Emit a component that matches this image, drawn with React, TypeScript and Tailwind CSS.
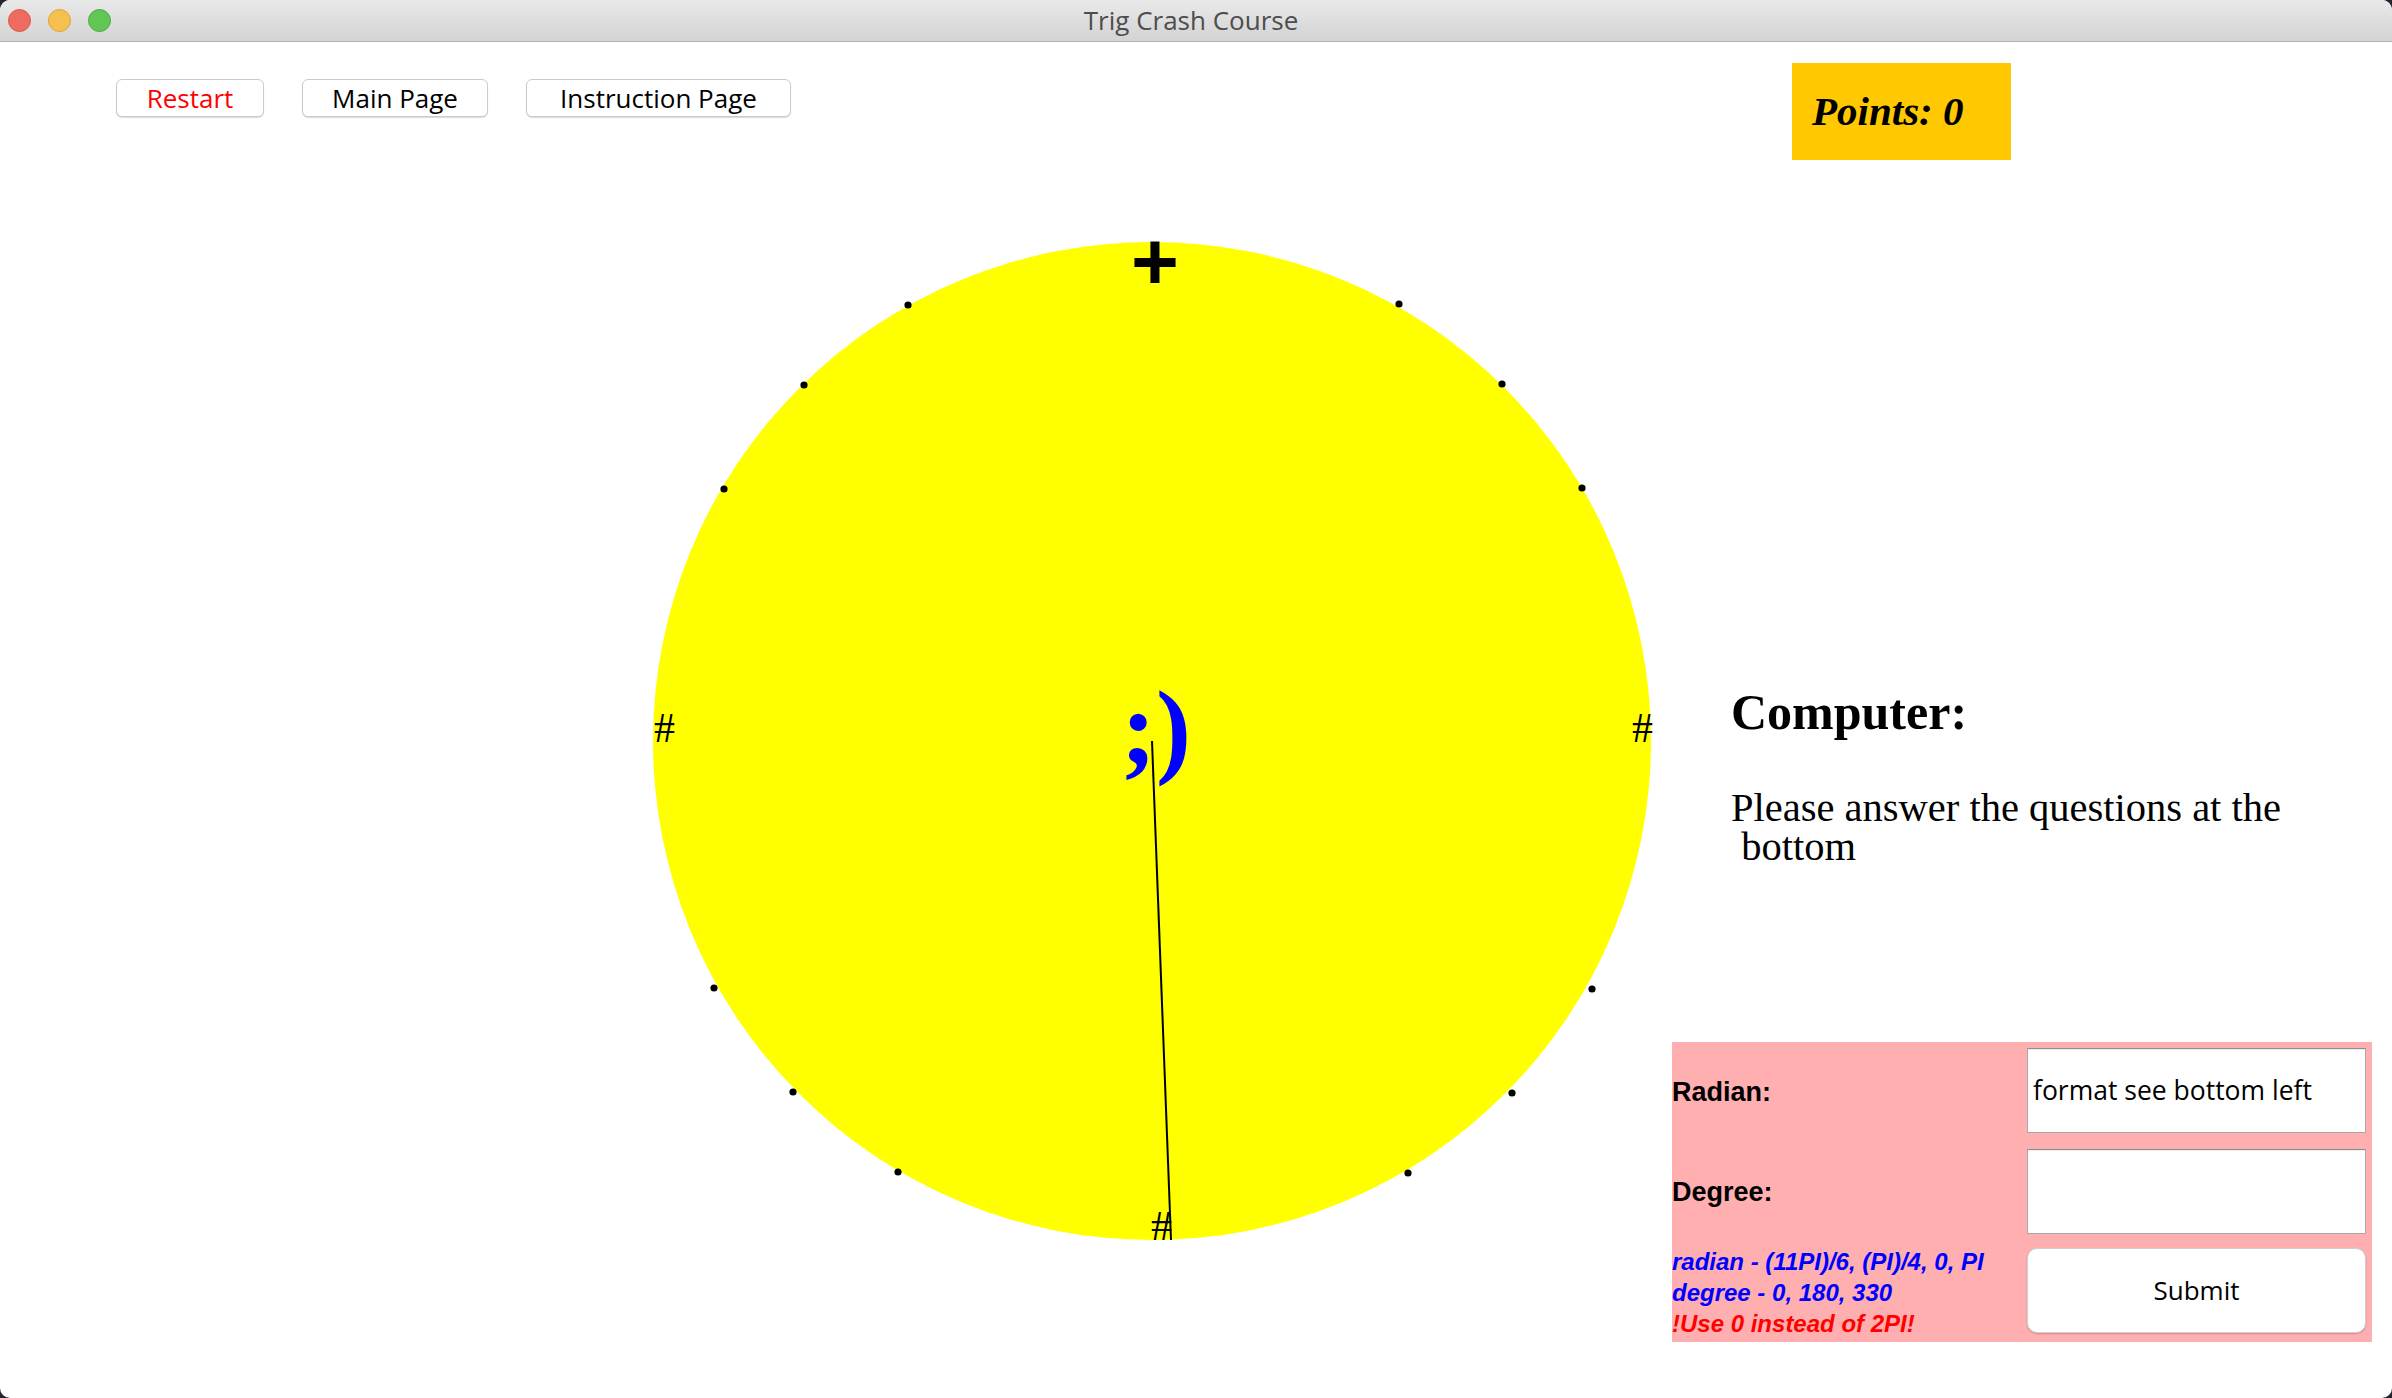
const serif = "font-['Liberation_Serif','Times_New_Roman',serif]";
const ui = "font-['Open_Sans','Noto_Sans',sans-serif]";
const arial = "font-['Liberation_Sans',Arial,sans-serif]";

// svg origin on the page is (642, 181)
const OX = 642;
const OY = 181;
const CX = 510;
const CY = 560;
const R = 499;

// tick dots, page coordinates
const dots: [number, number][] = [
  [908, 305], [804, 385], [724, 489],
  [1399, 304], [1502, 384], [1582, 488],
  [714, 988], [793, 1092], [898, 1172],
  [1592, 989], [1512, 1093], [1408, 1173],
];

function TitleBar() {
  return (
    <div className="h-[42px] flex items-center border-b border-[#b4b4b4] bg-gradient-to-b from-[#e9e9e9] to-[#d3d3d3]">
      <div className="w-[120px] flex items-center gap-[17px] pl-[8px]">
        <span className="w-[23px] h-[23px] rounded-full bg-[#ee6b60] border border-[#d8584d]" />
        <span className="w-[23px] h-[23px] rounded-full bg-[#f6c04f] border border-[#dba33a]" />
        <span className="w-[23px] h-[23px] rounded-full bg-[#62c655] border border-[#4fa942]" />
      </div>
      <div className={`flex-1 text-center pr-[10px] text-[26px] text-[#4d4d4d] ${ui}`}>Trig Crash Course</div>
      <div className="w-[120px]" />
    </div>
  );
}

function TopButton({ label, width, red }: { label: string; width: string; red?: boolean }) {
  return (
    <button
      className={`${width} h-[38px] rounded-[6px] bg-white border border-[#cbcbcb] shadow-[0_1px_1px_rgba(0,0,0,0.15)] text-[26px] leading-none ${ui} ${
        red ? 'text-[#ff0000]' : 'text-black'
      }`}
    >
      {label}
    </button>
  );
}

function UnitCircle() {
  return (
    <svg width={1020} height={1070} viewBox="0 0 1020 1070" className="ml-[642px] mt-[64px]">
      <circle cx={CX} cy={CY} r={R} fill="#ffff00" />
      {dots.map(([x, y]) => (
        <circle key={`${x}-${y}`} cx={x - OX} cy={y - OY} r={3.6} fill="#000" />
      ))}
      <text x={513} y={108} textAnchor="middle" fontSize={82} fontWeight={700} fontFamily="Liberation Sans, Arial, sans-serif">
        +
      </text>
      <g fontSize={42} fontFamily="Liberation Serif, Times New Roman, serif" fill="#000">
        <text x={12} y={561}>#</text>
        <text x={990} y={561}>#</text>
        <text x={509} y={1059}>#</text>
      </g>
      <text x={479} y={583} fontSize={105} fontWeight={700} fill="#0000ff" fontFamily="Liberation Serif, Times New Roman, serif">
        ;)
      </text>
      <line x1={CX} y1={CY} x2={529} y2={1059} stroke="#000" strokeWidth={2} />
    </svg>
  );
}

function Field({ value }: { value?: string }) {
  return (
    <div className="h-full bg-white border border-[#a9a9a9] border-t-[#8e8e8e] shadow-[inset_0_1px_1px_rgba(0,0,0,0.08)] flex items-center px-[5px]">
      <span className={`text-[26.5px] text-black ${ui}`}>{value}</span>
    </div>
  );
}

function AnswerPanel() {
  return (
    <div className="mt-auto mb-[56px] w-[700px] h-[300px] grid grid-cols-2 grid-rows-3 bg-[#ffafaf]">
      <div className={`flex items-center text-[27px] font-bold text-black ${arial}`}>Radian:</div>
      <div className="pl-[5px] pr-[6px] pt-[6px] pb-[9px]">
        <Field value="format see bottom left" />
      </div>
      <div className={`flex items-center text-[27px] font-bold text-black ${arial}`}>Degree:</div>
      <div className="pl-[5px] pr-[6px] pt-[7px] pb-[8px]">
        <Field />
      </div>
      <div className={`flex flex-col justify-center text-[24px] leading-[31px] font-bold italic ${arial}`}>
        <span className="text-[#0000ff]">radian - (11PI)/6, (PI)/4, 0, PI</span>
        <span className="text-[#0000ff]">degree - 0, 180, 330</span>
        <span className="text-[#ff0000]">!Use 0 instead of 2PI!</span>
      </div>
      <div className="pl-[5px] pr-[6px] pt-[6px] pb-[9px]">
        <button
          className={`w-full h-full rounded-[10px] bg-white border border-[#cfcfcf] shadow-[0_1px_2px_rgba(0,0,0,0.2)] text-[26px] text-black ${ui}`}
        >
          Submit
        </button>
      </div>
    </div>
  );
}

export default function App() {
  return (
    <div className="w-[2392px] h-[1398px] bg-[#24242f] overflow-hidden">
      <div className="w-full h-full rounded-[10px] overflow-hidden bg-white flex flex-col">
        <TitleBar />
        <div className="flex-1 flex">
          <div className="w-[1672px] flex flex-col">
            <div className="pt-[37px] pl-[116px] flex gap-[38px]">
              <TopButton label="Restart" width="w-[148px]" red />
              <TopButton label="Main Page" width="w-[186px]" />
              <TopButton label="Instruction Page" width="w-[265px]" />
            </div>
            <UnitCircle />
          </div>
          <div className="w-[720px] flex flex-col">
            <div className="mt-[21px] ml-[120px] w-[219px] h-[97px] bg-[#ffc800] flex items-center pl-[20px]">
              <span className={`text-[41px] font-bold italic text-black ${serif}`}>Points: 0</span>
            </div>
            <h1 className={`mt-[527px] ml-[59px] text-[50px] leading-none font-bold text-black ${serif}`}>Computer:</h1>
            <p className={`mt-[51px] ml-[59px] text-[40.5px] leading-[39px] text-black whitespace-pre ${serif}`}>
              {'Please answer the questions at the\n bottom'}
            </p>
            <AnswerPanel />
          </div>
        </div>
      </div>
    </div>
  );
}
